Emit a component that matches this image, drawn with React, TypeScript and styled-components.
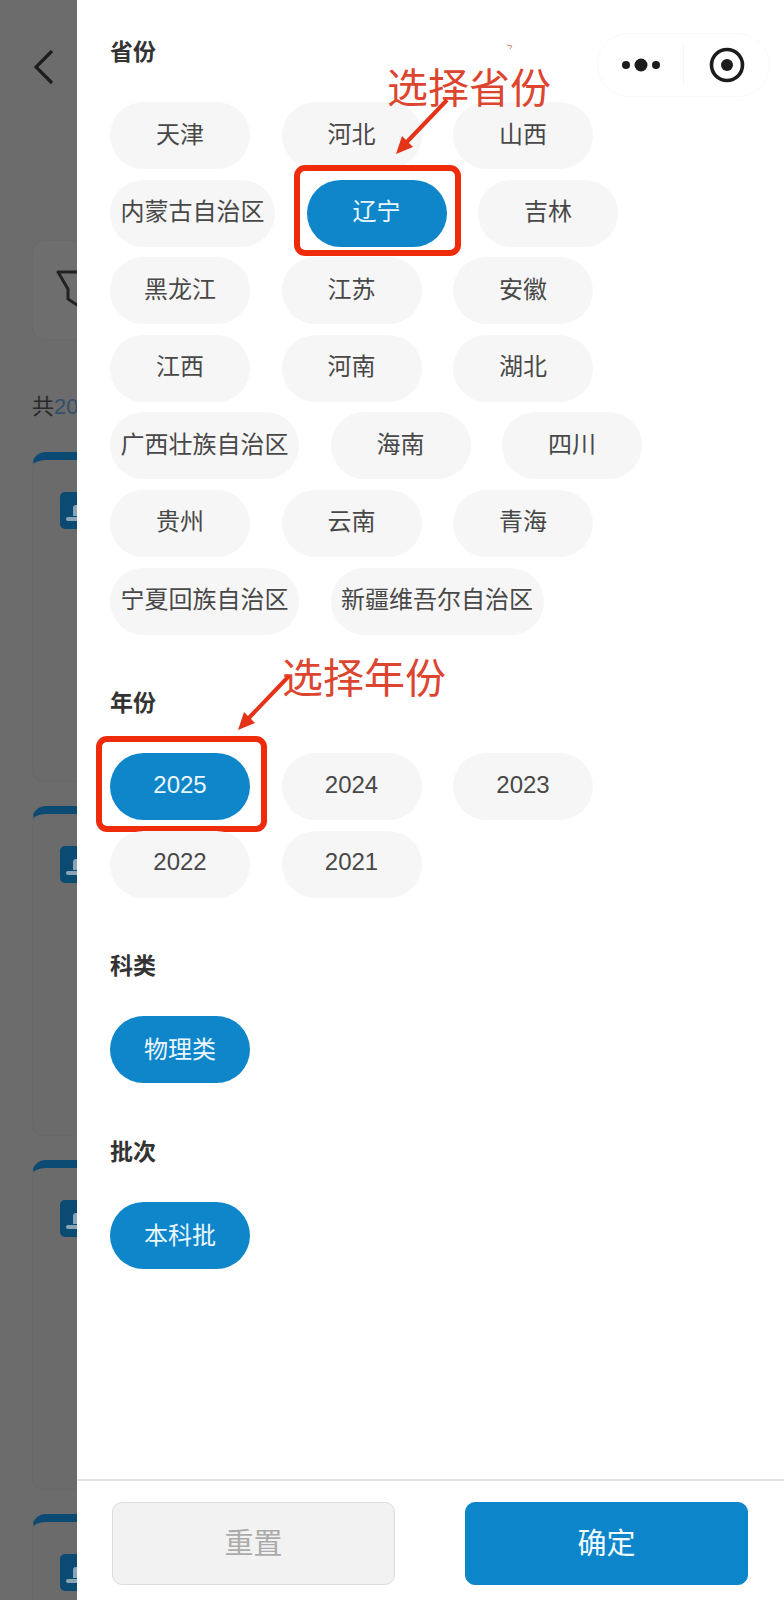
import React from "react";
import styled, { createGlobalStyle } from "styled-components";

const GlobalStyle = createGlobalStyle`
  html, body {
    margin: 0;
    padding: 0;
    background: #fff;
  }
  * {
    box-sizing: border-box;
  }
`;

const Screen = styled.div`
  position: relative;
  display: flex;
  width: 784px;
  height: 1600px;
  overflow: hidden;
  font-family: "Liberation Sans", "Noto Sans CJK SC", sans-serif;
`;

/* dimmed page behind the drawer */
const BackPage = styled.div`
  flex: 0 0 76.5px;
  height: 100%;
  overflow: hidden;
  background: #6c6c6c;
  color: #262626;
`;

const BackInner = styled.div`
  width: 400px;
  padding: 48px 0 0 32px;
`;

const BackArrow = styled.svg`
  display: block;
  width: 24px;
  height: 38px;
`;

const FilterCard = styled.div`
  display: flex;
  align-items: center;
  width: 300px;
  height: 100px;
  margin: 154px 0 0;
  padding-left: 23px;
  background: #6e6e6e;
  border: 1px solid #696969;
  border-radius: 12px;
`;

const TotalText = styled.div`
  margin-top: 51px;
  height: 37px;
  font-size: 22px;
  line-height: 32px;
  color: #2a2a2a;

  span {
    color: #33506a;
  }
`;

const ResultCard = styled.div`
  width: 300px;
  height: 330px;
  margin-top: 24px;
  padding-top: 32px;
  padding-left: 27px;
  background: #6b6b6b;
  border: 1px solid #686868;
  border-top: 8px solid #0b4a72;
  border-radius: 14px 14px 12px 12px;
`;

const CardTile = styled.div`
  position: relative;
  width: 38px;
  height: 37px;
  background: #0b4a72;
  border-radius: 5px;

  &::before {
    content: "";
    position: absolute;
    left: 13px;
    bottom: 13px;
    width: 12px;
    height: 11px;
    border-radius: 3px 3px 0 0;
    background: #8aa4b6;
  }

  &::after {
    content: "";
    position: absolute;
    left: 6px;
    bottom: 8px;
    width: 26px;
    height: 4px;
    border-radius: 2px;
    background: #8aa4b6;
  }
`;

/* filter drawer */
const Drawer = styled.div`
  flex: 1;
  display: flex;
  flex-direction: column;
  height: 100%;
  background: #fff;
`;

const DrawerBody = styled.div`
  flex: 1;
  padding: 37px 34px 0 33.5px;
`;

const Section = styled.section`
  margin-bottom: 53.5px;
`;

const SectionTitle = styled.div`
  height: 30px;
  margin-bottom: 35px;
  font-size: 23px;
  line-height: 30px;
  font-weight: 700;
  color: #333;
`;

const ChipGrid = styled.div`
  display: flex;
  flex-wrap: wrap;
  gap: 10.6px 31.5px;
`;

const Chip = styled.div<{ $active?: boolean; $lift?: number }>`
  position: relative;
  display: flex;
  align-items: center;
  justify-content: center;
  min-width: 140px;
  height: 67px;
  padding: 0 10.5px ${(p) => p.$lift ?? 4}px;
  border-radius: 34px;
  font-size: 24px;
  white-space: nowrap;
  background: ${(p) => (p.$active ? "#0f86ca" : "#f6f6f6")};
  color: ${(p) => (p.$active ? "#eaf7ff" : "#484848")};
`;

/* red marker drawn over a chip */
const MarkBox = styled.div<{ $top: number; $left: number; $right: number; $bottom: number }>`
  position: absolute;
  top: -${(p) => p.$top}px;
  left: -${(p) => p.$left}px;
  right: -${(p) => p.$right}px;
  bottom: -${(p) => p.$bottom}px;
  border: 6px solid #ee2c0c;
  border-radius: 11px;
`;

const Note = styled.div<{ $left: number; $top: number }>`
  position: absolute;
  left: ${(p) => p.$left}px;
  top: ${(p) => p.$top}px;
  font-size: 41px;
  line-height: 48px;
  color: #dc4630;
  white-space: nowrap;
`;

const NoteArrows = styled.svg`
  position: absolute;
  left: 0;
  top: 0;
  width: 784px;
  height: 800px;
  pointer-events: none;
`;

const Footer = styled.div`
  display: flex;
  justify-content: space-between;
  height: 121px;
  padding: 21px 36px 0 35.5px;
  border-top: 2px solid #e2e2e2;
`;

const FooterButton = styled.div<{ $primary?: boolean }>`
  display: flex;
  align-items: center;
  justify-content: center;
  width: 283px;
  height: 83px;
  padding-bottom: 6px;
  border-radius: 10px;
  font-size: 29px;
  background: ${(p) => (p.$primary ? "#0c85ca" : "#f2f2f2")};
  color: ${(p) => (p.$primary ? "#f2fbff" : "#ababab")};
  border: 1px solid ${(p) => (p.$primary ? "#0c85ca" : "#dcdcdc")};
`;

/* mini program capsule */
const Capsule = styled.div`
  position: absolute;
  left: 597px;
  top: 33px;
  display: flex;
  align-items: center;
  width: 173px;
  height: 64px;
  background: #fff;
  border: 1px solid #fafafa;
  border-radius: 32px;
`;

const CapsulePart = styled.div`
  flex: 1;
  display: flex;
  align-items: center;
  justify-content: center;
  height: 42px;

  & + & {
    border-left: 1px solid #f6f6f6;
  }
`;

const provinces = [
  "天津", "河北", "山西", "内蒙古自治区", "辽宁", "吉林", "黑龙江", "江苏", "安徽",
  "江西", "河南", "湖北", "广西壮族自治区", "海南", "四川", "贵州", "云南", "青海",
  "宁夏回族自治区", "新疆维吾尔自治区",
];
const years = ["2025", "2024", "2023", "2022", "2021"];

const App = () => {
  return (
    <Screen>
      <GlobalStyle />
      <BackPage>
        <BackInner>
          <BackArrow viewBox="0 0 24 38">
            <path d="M20 3 L4 19 L20 35" fill="none" stroke="#1d1d1d" strokeWidth="3.2" />
          </BackArrow>
          <FilterCard>
            <svg width="40" height="42" viewBox="0 0 40 42">
              <path
                d="M2 3 H38 L24 20 V38 L12 30 V20 Z"
                fill="none"
                stroke="#222"
                strokeWidth="3"
                strokeLinejoin="round"
              />
            </svg>
          </FilterCard>
          <TotalText>
            共<span>20</span>
          </TotalText>
          {[0, 1, 2, 3].map((i) => (
            <ResultCard key={i}>
              <CardTile />
            </ResultCard>
          ))}
        </BackInner>
      </BackPage>

      <Drawer>
        <DrawerBody>
          <Section>
            <SectionTitle>省份</SectionTitle>
            <ChipGrid>
              {provinces.map((name) => (
                <Chip key={name} $active={name === "辽宁"} $lift={7}>
                  {name}
                  {name === "辽宁" && <MarkBox $top={15} $left={13} $right={14} $bottom={9} />}
                </Chip>
              ))}
            </ChipGrid>
          </Section>
          <Section>
            <SectionTitle>年份</SectionTitle>
            <ChipGrid>
              {years.map((year) => (
                <Chip key={year} $active={year === "2025"}>
                  {year}
                  {year === "2025" && <MarkBox $top={17} $left={14} $right={17} $bottom={12} />}
                </Chip>
              ))}
            </ChipGrid>
          </Section>
          <Section>
            <SectionTitle>科类</SectionTitle>
            <ChipGrid>
              <Chip $active>物理类</Chip>
            </ChipGrid>
          </Section>
          <Section>
            <SectionTitle>批次</SectionTitle>
            <ChipGrid>
              <Chip $active>本科批</Chip>
            </ChipGrid>
          </Section>
        </DrawerBody>
        <Footer>
          <FooterButton>重置</FooterButton>
          <FooterButton $primary>确定</FooterButton>
        </Footer>
      </Drawer>

      <Capsule>
        <CapsulePart>
          <svg width="44" height="16" viewBox="0 0 44 16">
            <circle cx="7" cy="8" r="4" fill="#1c1c1c" />
            <circle cx="22" cy="8" r="6.5" fill="#1c1c1c" />
            <circle cx="37" cy="8" r="4" fill="#1c1c1c" />
          </svg>
        </CapsulePart>
        <CapsulePart>
          <svg width="38" height="38" viewBox="0 0 38 38">
            <circle cx="19" cy="19" r="15.5" fill="none" stroke="#1c1c1c" strokeWidth="3.6" />
            <circle cx="19" cy="19" r="6" fill="#1c1c1c" />
          </svg>
        </CapsulePart>
      </Capsule>

      <Note $left={387} $top={65}>选择省份</Note>
      <Note $left={282} $top={655}>选择年份</Note>
      <NoteArrows viewBox="0 0 784 800">
        <path d="M447 100 L403 146" stroke="#e5331a" strokeWidth="4" fill="none" />
        <path d="M396 154 L402 136 L413 147 Z" fill="#e5331a" />
        <path d="M289 676 L245 722" stroke="#e5331a" strokeWidth="4" fill="none" />
        <path d="M238 730 L244 712 L255 723 Z" fill="#e5331a" />
        <path d="M507 45 L512 46 L510 49" stroke="#d98a80" strokeWidth="1" fill="none" />
      </NoteArrows>
    </Screen>
  );
};

export default App;
